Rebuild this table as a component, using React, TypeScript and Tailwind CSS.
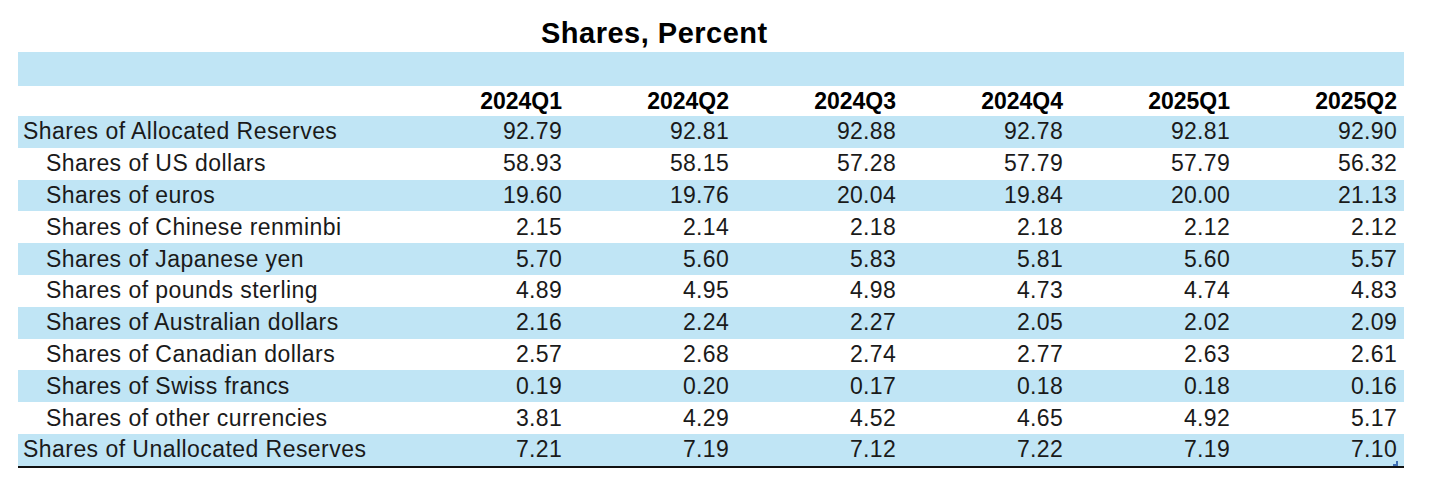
const columns = ["2024Q1", "2024Q2", "2024Q3", "2024Q4", "2025Q1", "2025Q2"];

type Row = { label: string; indent: boolean; values: string[] };

const rows: Row[] = [
  { label: "Shares of Allocated Reserves", indent: false, values: ["92.79", "92.81", "92.88", "92.78", "92.81", "92.90"] },
  { label: "Shares of US dollars", indent: true, values: ["58.93", "58.15", "57.28", "57.79", "57.79", "56.32"] },
  { label: "Shares of euros", indent: true, values: ["19.60", "19.76", "20.04", "19.84", "20.00", "21.13"] },
  { label: "Shares of Chinese renminbi", indent: true, values: ["2.15", "2.14", "2.18", "2.18", "2.12", "2.12"] },
  { label: "Shares of Japanese yen", indent: true, values: ["5.70", "5.60", "5.83", "5.81", "5.60", "5.57"] },
  { label: "Shares of pounds sterling", indent: true, values: ["4.89", "4.95", "4.98", "4.73", "4.74", "4.83"] },
  { label: "Shares of Australian dollars", indent: true, values: ["2.16", "2.24", "2.27", "2.05", "2.02", "2.09"] },
  { label: "Shares of Canadian dollars", indent: true, values: ["2.57", "2.68", "2.74", "2.77", "2.63", "2.61"] },
  { label: "Shares of Swiss francs", indent: true, values: ["0.19", "0.20", "0.17", "0.18", "0.18", "0.16"] },
  { label: "Shares of other currencies", indent: true, values: ["3.81", "4.29", "4.52", "4.65", "4.92", "5.17"] },
  { label: "Shares of Unallocated Reserves", indent: false, values: ["7.21", "7.19", "7.12", "7.22", "7.19", "7.10"] },
];

export default function App() {
  return (
    <div className="w-[1440px] h-[489px] bg-white text-[#1a1a1a] font-['Liberation_Sans',Arial,sans-serif]">
      {/* Title */}
      <div className="h-[52px] pt-[19px] pl-[541px]">
        <h1 className="text-[29px] leading-[29px] font-bold tracking-[0.5px] text-black">Shares, Percent</h1>
      </div>

      <div className="ml-[18px] w-[1386px]">
        {/* empty blue band */}
        <div className="h-[34px] bg-[#c0e5f5]" />

        {/* header */}
        <div className="grid grid-cols-[384px_repeat(6,167px)] h-[30px] items-center">
          <div />
          {columns.map((c) => (
            <div key={c} className="text-right pr-[7px] text-[23px] leading-none font-bold text-black">
              {c}
            </div>
          ))}
        </div>

        {/* body */}
        <div className="border-b-2 border-[#111]">
          {rows.map((r, i) => (
            <div
              key={r.label}
              className={`relative grid grid-cols-[384px_repeat(6,167px)] h-[31.8px] items-center text-[23px] leading-none ${
                i % 2 === 0 ? "bg-[#c0e5f5]" : "bg-white"
              }`}
            >
              <div className={`tracking-[0.45px] ${r.indent ? "pl-[28px]" : "pl-[5px]"}`}>{r.label}</div>
              {r.values.map((v, j) => (
                <div key={j} className="text-right pr-[7px] tracking-[0.3px]">
                  {v}
                </div>
              ))}
              {i === rows.length - 1 && (
                <span className="absolute right-[6px] bottom-0 w-[5px] h-[5px] border-r-2 border-b-2 border-[#3f6fb5]" />
              )}
            </div>
          ))}
        </div>
      </div>
    </div>
  );
}
